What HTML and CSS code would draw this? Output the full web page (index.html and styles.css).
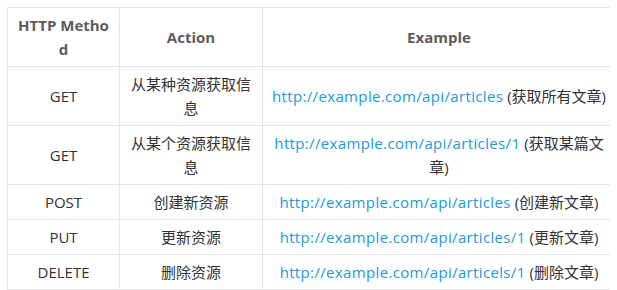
FILE: index.html
```html
<!DOCTYPE html>
<html lang="zh-CN">
<head>
    <meta charset="UTF-8">
    <meta name="viewport" content="width=device-width, initial-scale=1.0">
    <title>RESTful API</title>
    <link rel="stylesheet" href="styles.css">
</head>
<body>
    <table class="api-table">
        <thead>
            <tr>
                <th class="col-method">HTTP Method</th>
                <th class="col-action">Action</th>
                <th class="col-example">Example</th>
            </tr>
        </thead>
        <tbody>
            <tr>
                <td>GET</td>
                <td>从某种资源获取信息</td>
                <td><a href="#">http://example.com/api/articles</a> (获取所有文章)</td>
            </tr>
            <tr>
                <td>GET</td>
                <td>从某个资源获取信息</td>
                <td><a href="#">http://example.com/api/articles/1</a> (获取某篇文章)</td>
            </tr>
            <tr>
                <td>POST</td>
                <td>创建新资源</td>
                <td><a href="#">http://example.com/api/articles</a> (创建新文章)</td>
            </tr>
            <tr>
                <td>PUT</td>
                <td>更新资源</td>
                <td><a href="#">http://example.com/api/articles/1</a> (更新文章)</td>
            </tr>
            <tr>
                <td>DELETE</td>
                <td>删除资源</td>
                <td><a href="#">http://example.com/api/articels/1</a> (删除文章)</td>
            </tr>
        </tbody>
    </table>
</body>
</html>
```

FILE: styles.css
```css
body {
    margin: 7px;
    background-color: #fff;
    font-family: "Open Sans", "Noto Sans CJK SC", sans-serif;
    font-size: 15px;
    color: #333;
}

.api-table {
    width: 609px;
    border-collapse: collapse;
    table-layout: fixed;
}

.api-table th,
.api-table td {
    box-sizing: border-box;
    border: 1px solid #e6e6e6;
    padding: 5px 8px;
    line-height: 24px;
    text-align: center;
    vertical-align: middle;
    word-break: break-all;
}

.api-table th {
    color: #5c5c5c;
    font-weight: bold;
}

.col-method {
    width: 112px;
}

.col-action {
    width: 143px;
}

.api-table a {
    color: #1a9ad6;
    text-decoration: none;
    letter-spacing: 0.35px;
}
```
